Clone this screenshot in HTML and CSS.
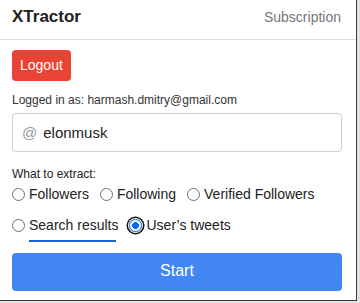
FILE: index.html
```html
<!DOCTYPE html>
<html>
<head>
<meta charset="utf-8">
<link rel="stylesheet" href="styles.css">
</head>
<body>
<div class="popup">
  <header class="header">
    <span class="brand">XTractor</span>
    <span class="sub">Subscription</span>
  </header>
  <main class="content">
    <button class="logout">Logout</button>
    <p class="logged">Logged in as: harmash.dmitry@gmail.com</p>
    <div class="field">
      <span class="at">@</span>
      <input class="username" type="text" value="elonmusk">
    </div>
    <p class="what">What to extract:</p>
    <div class="options">
      <label class="opt"><input type="radio" name="t" class="radio"><span>Followers</span></label>
      <label class="opt"><input type="radio" name="t" class="radio"><span>Following</span></label>
      <label class="opt"><input type="radio" name="t" class="radio"><span>Verified Followers</span></label>
      <label class="opt"><input type="radio" name="t" class="radio"><span class="marked">Search results</span></label>
      <label class="opt"><input type="radio" name="t" class="radio focused" checked><span>User’s tweets</span></label>
    </div>
    <button class="start">Start</button>
  </main>
</div>
</body>
</html>
```
FILE: styles.css
```css
html, body {
  margin: 0;
  padding: 0;
}
body {
  background: #e2e2e2;
  font-family: "Liberation Sans", Arial, sans-serif;
  color: #222;
}
.popup {
  width: 356px;
  height: 300px;
  background: #fff;
  border-right: 1px solid #3a3a3a;
  border-bottom: 1px solid #3a3a3a;
}
.header {
  box-sizing: border-box;
  height: 40px;
  padding: 7px 15px 0 12px;
  border-bottom: 1px solid #dcdcdc;
  display: flex;
  justify-content: space-between;
  align-items: baseline;
}
.brand {
  font-size: 17px;
  font-weight: bold;
  line-height: 20px;
  color: #202020;
}
.sub {
  font-size: 14px;
  line-height: 20px;
  color: #777;
}
.content {
  padding: 10px 14px 0 12px;
  display: flex;
  flex-direction: column;
  align-items: flex-start;
}
.logout {
  font-family: inherit;
  font-size: 14px;
  line-height: 17px;
  height: 31px;
  padding: 7px 8px;
  border: none;
  border-radius: 4px;
  background: #ea4335;
  color: #fff;
}
.logged {
  margin: 12px 0 0;
  font-size: 12px;
  line-height: 15px;
  color: #333;
}
.field {
  box-sizing: border-box;
  margin-top: 5px;
  width: 330px;
  height: 39px;
  border: 1px solid #cfcfcf;
  border-radius: 4px;
  display: flex;
  align-items: center;
  padding-left: 9px;
}
.at {
  font-size: 15px;
  line-height: 17px;
  color: #999;
}
.username {
  flex: 1;
  border: none;
  outline: none;
  padding: 0;
  margin-left: 6px;
  font-family: inherit;
  font-size: 15px;
  line-height: 17px;
  color: #222;
  background: transparent;
}
.what {
  margin: 15px 0 0;
  font-size: 12px;
  line-height: 15px;
  color: #222;
}
.options {
  margin-top: 4px;
  width: 330px;
  display: flex;
  flex-wrap: wrap;
  column-gap: 11px;
  row-gap: 14px;
}
.opt {
  display: flex;
  align-items: center;
  font-size: 14px;
  line-height: 17px;
  color: #222;
}
.radio {
  appearance: none;
  -webkit-appearance: none;
  box-sizing: border-box;
  width: 13px;
  height: 13px;
  margin: 0 4px 0 0;
  border: 1px solid #6f6f6f;
  border-radius: 50%;
  background: #fff;
}
.radio:checked {
  border: 1.5px solid #0b6cf0;
  background: radial-gradient(circle, #0b6cf0 0 3.2px, #fff 3.7px);
}
.radio.focused {
  box-shadow: 0 0 0 1px #fff, 0 0 0 2.5px #111;
}
.marked {
  position: relative;
}
.marked::after {
  content: "";
  position: absolute;
  left: 0;
  top: 23px;
  width: 87px;
  height: 2px;
  background: #1b63d8;
}
.start {
  margin-top: 19px;
  width: 330px;
  height: 38px;
  padding: 9px 0 11px;
  border: none;
  border-radius: 4px;
  background: #4286f4;
  color: #fff;
  font-family: inherit;
  font-size: 16px;
  line-height: 18px;
}
```
